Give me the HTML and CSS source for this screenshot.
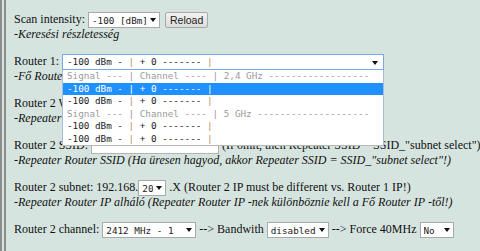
FILE: index.html
```html
<!DOCTYPE html>
<html lang="hu">
<head>
    <meta charset="UTF-8">
    <meta name="viewport" content="width=device-width, initial-scale=1.0">
    <title>Repeater beállítás</title>
    <link rel="stylesheet" href="styles.css">
</head>
<body>
<div class="page">
    <div class="block">
        <div class="line">Scan intensity: <span class="pick w-scan"><select><option>-100 [dBm]</option></select></span> <button class="reload">Reload</button></div>
        <div class="note">-Keresési részletesség</div>
    </div>
    <div class="block">
        <div class="line">Router 1: <span class="combo"><span class="opt-text">-100 dBm - <span class="bar">|</span> + 0 ------- <span class="bar">|</span></span>
            <div class="list">
                <div class="opt off">Signal --- | Channel ---- | 2,4 GHz ------------------</div>
                <div class="opt on">-100 dBm - <span class="bar">|</span> + 0 ------- <span class="bar">|</span></div>
                <div class="opt">-100 dBm - <span class="bar">|</span> + 0 ------- <span class="bar">|</span></div>
                <div class="opt off">Signal --- | Channel ---- | 5 GHz --------------------</div>
                <div class="opt">-100 dBm - <span class="bar">|</span> + 0 ------- <span class="bar">|</span></div>
                <div class="opt">-100 dBm - <span class="bar">|</span> + 0 ------- <span class="bar">|</span></div>
            </div>
        </span></div>
        <div class="note">-Fő Router kiválasztása (jelerősség, csatorna)</div>
    </div>
    <div class="block">
        <div class="line">Router 2 WiFi password: <input class="ssid" type="password"></div>
        <div class="note">-Repeater Router jelszava (ha üresen hagyod, a Fő Router jelszava)</div>
    </div>
    <div class="block">
        <div class="line">Router 2 SSID: <input class="ssid" type="text"> (If omit, then Repeater SSID = SSID_"subnet select")</div>
        <div class="note">-Repeater Router SSID (Ha üresen hagyod, akkor Repeater SSID = SSID_"subnet select"!)</div>
    </div>
    <div class="block">
        <div class="line">Router 2 subnet: 192.168.<span class="pick w-sub"><select><option>20</option></select></span> .X (Router 2 IP must be different vs. Router 1 IP!)</div>
        <div class="note">-Repeater Router IP alháló (Repeater Router IP -nek különböznie kell a Fő Router IP -től!)</div>
    </div>
    <div class="block">
        <div class="line">Router 2 channel: <span class="pick w-chan"><select><option>2412 MHz - 1</option></select></span> --&gt; Bandwith <span class="pick w-bw"><select><option>disabled</option></select></span> --&gt; Force 40MHz <span class="pick w-no"><select><option>No</option></select></span></div>
    </div>
</div>
</body>
</html>
```
FILE: styles.css
```css
body{
    margin:0;
    background:#d6e4df;
    font-family:"Liberation Serif","Times New Roman",serif;
    font-size:12px;
    color:#111;
}
.page{
    border-left:6px double #8d8d8d;
    min-height:251px;
    box-sizing:border-box;
    padding:10px 0 0 8px;
    overflow:hidden;
}
.block{
    margin-bottom:12px;
}
.line{
    height:18px;
    line-height:18px;
    white-space:nowrap;
}
.note{
    height:12px;
    line-height:12px;
    font-style:italic;
    white-space:nowrap;
}
/* selects */
.pick{
    position:relative;
    display:inline-block;
    vertical-align:middle;
    height:16px;
}
.pick select{
    -webkit-appearance:none;
    appearance:none;
    display:block;
    width:100%;
    height:16px;
    margin:0;
    padding:0 12px 0 3px;
    border:1px solid #a9a9a9;
    border-radius:0;
    background:#fff;
    font-family:"DejaVu Sans Mono","Liberation Mono",monospace;
    font-size:9.3px;
    color:#222;
}
.pick::after,
.combo::after{
    content:"";
    position:absolute;
    right:4px;top:6px;
    border-left:3px solid transparent;
    border-right:3px solid transparent;
    border-top:4px solid #111;
    pointer-events:none;
}
.w-scan{width:72px;}
.w-sub{width:28px;}
.w-chan{width:94px;}
.w-bw{width:62px;}
.w-no{width:34px;}
.reload{
    height:16px;
    margin:0 0 0 2px;
    padding:0 4px;
    vertical-align:middle;
    font-family:"Liberation Sans",Arial,sans-serif;
    font-size:10.5px;
    line-height:14px;
    color:#222;
    background:linear-gradient(#f2f2f2,#dcdcdc);
    border:1px solid #a8a8a8;
    border-radius:2px;
}
.ssid{
    width:128px;height:16px;
    box-sizing:border-box;
    margin:0;padding:0 2px;
    vertical-align:middle;
    border:1px solid #b4b4b4;
    background:#fff;
}
/* open dropdown of Router 1 */
.combo{
    position:relative;
    z-index:2;
    display:inline-block;
    vertical-align:middle;
    width:322px;height:16px;
    box-sizing:border-box;
    border:1px solid #7aa7e6;
    background:#fff;
    padding-left:4px;
    font-family:"DejaVu Sans Mono","Liberation Mono",monospace;
    font-size:9.3px;
    line-height:14px;
    color:#222;
}
.combo::after{right:5px;}
.opt-text{white-space:pre;}
.list{
    position:absolute;
    left:-1px;right:-1px;top:15px;
    background:#fff;
    border:1px solid #a9bcd9;
    border-top:0;
    border-bottom-color:#b8b8b8;
}
.opt{
    height:12.5px;
    line-height:12.5px;
    padding-left:4px;
    white-space:pre;
    color:#222;
}
.bar{color:#b8925a;}
.opt.off{color:#9a9a9a;}
.opt.on{background:#1e90ff;color:#fff;}
.opt.on .bar{color:#fff;}
```
